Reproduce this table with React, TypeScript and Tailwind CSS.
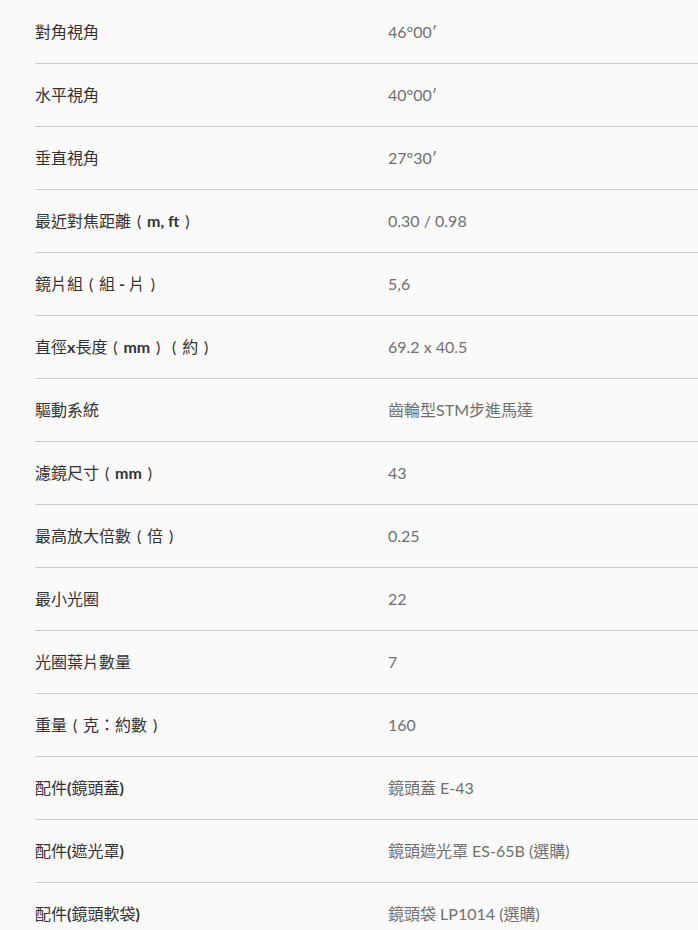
import React from 'react';

interface SpecRow {
  label: string;
  value: string;
}

const specs: SpecRow[] = [
  { label: '對角視角', value: '46°00′' },
  { label: '水平視角', value: '40°00′' },
  { label: '垂直視角', value: '27°30′' },
  { label: '最近對焦距離（m, ft）', value: '0.30 / 0.98' },
  { label: '鏡片組（組 - 片）', value: '5,6' },
  { label: '直徑x長度（mm）（約）', value: '69.2 x 40.5' },
  { label: '驅動系統', value: '齒輪型STM步進馬達' },
  { label: '濾鏡尺寸（mm）', value: '43' },
  { label: '最高放大倍數（倍）', value: '0.25' },
  { label: '最小光圈', value: '22' },
  { label: '光圈葉片數量', value: '7' },
  { label: '重量（克：約數）', value: '160' },
  { label: '配件(鏡頭蓋)', value: '鏡頭蓋 E-43' },
  { label: '配件(遮光罩)', value: '鏡頭遮光罩 ES-65B (選購)' },
  { label: '配件(鏡頭軟袋)', value: '鏡頭袋 LP1014 (選購)' },
];

// Latin runs bold, CJK runs regular, full-width parens drawn centred in a 1em box
const Label: React.FC<{ text: string }> = ({ text }) => {
  const parts = text.match(/[（）]|[\x20-\x7e]+|[^\x20-\x7e（）]+/g) || [];
  return (
    <>
      {parts.map((part, i) => {
        if (part === '（' || part === '）') {
          return (
            <span key={i} className="inline-block w-[16px] text-center font-normal">
              {part === '（' ? '(' : ')'}
            </span>
          );
        }
        if (/^[\x20-\x7e]+$/.test(part)) {
          return <span key={i} className="font-bold">{part}</span>;
        }
        return <span key={i} className="font-normal">{part}</span>;
      })}
    </>
  );
};

export default function App() {
  return (
    <div
      className="min-h-[930px] bg-[#fafafa] pl-[35px] pt-[1px] font-normal"
      style={{ fontFamily: 'Lato, "Noto Sans CJK TC", sans-serif' }}
    >
      {specs.map(row => (
        <div
          key={row.label}
          className="flex h-[63px] items-center border-b border-[#cccccc] text-[16px]"
        >
          <div className="w-[353px] shrink-0 text-[#333333]">
            <Label text={row.label} />
          </div>
          <div className="text-[#707070]">{row.value}</div>
        </div>
      ))}
    </div>
  );
}
